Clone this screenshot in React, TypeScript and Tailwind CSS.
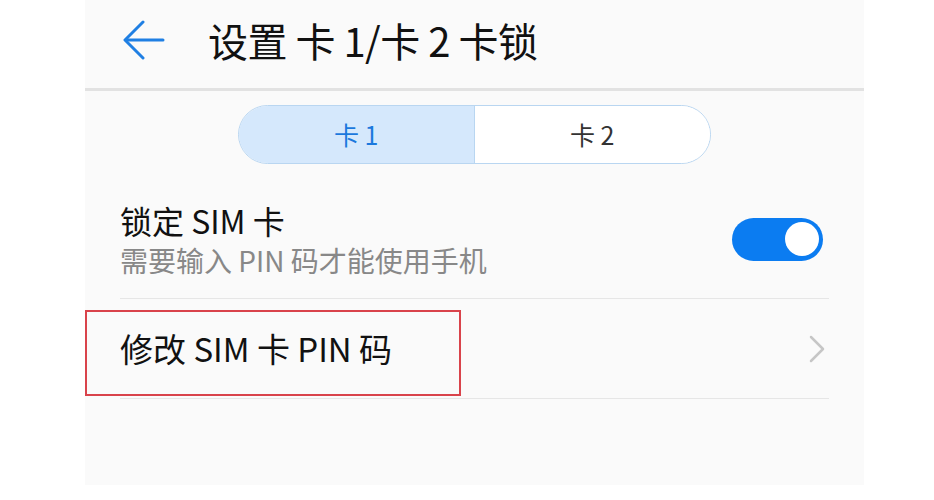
export default function App() {
    const font = { fontFamily: '"Noto Sans CJK SC", "Noto Sans", sans-serif' };

    return (
        <div className="w-full h-[500px] bg-white" style={font}>
            <div className="ml-[85px] w-[779px] h-[485px] bg-[#fafafa] flex flex-col">
                {/* header */}
                <div className="h-[88px] flex items-center pl-[38px] pb-[8px]">
                    <svg width="42" height="40" viewBox="0 0 42 40" fill="none" stroke="#1f7fe3" strokeWidth="3" strokeLinecap="round" strokeLinejoin="round">
                        <path d="M40 20H3" />
                        <path d="M20 2L2 20L20 38" />
                    </svg>
                    <h1 className="ml-[43px] text-[40px] leading-none text-[#111] tracking-[-0.5px]">设置 卡 1/卡 2 卡锁</h1>
                </div>
                <div className="h-[3px] bg-[#e2e2e2]" />

                {/* sim tabs */}
                <div className="mt-[14px] ml-[153px] w-[473px] h-[59px] rounded-full border-[1.5px] border-[#b9d6f1] overflow-hidden flex">
                    <div className="w-1/2 bg-[#d5e8fc] border-r-[1.5px] border-[#b9d6f1] flex items-center justify-center text-[25px] text-[#1b78dd]">卡 1</div>
                    <div className="w-1/2 bg-white flex items-center justify-center text-[25px] text-[#333]">卡 2</div>
                </div>

                {/* lock sim */}
                <div className="mx-[35px] h-[135px] flex items-center justify-between border-b border-[#e6e6e6] pt-[16px]">
                    <div className="flex flex-col">
                        <span className="text-[32px] leading-[40px] text-[#111]">锁定 SIM 卡</span>
                        <span className="text-[28px] leading-[36px] text-[#888] mt-[2px]">需要输入 PIN 码才能使用手机</span>
                    </div>
                    <div className="mr-[6px] w-[91px] h-[43px] rounded-full bg-[#0b7cf1] flex items-center justify-end pr-[4px]">
                        <div className="w-[34px] h-[34px] rounded-full bg-white" />
                    </div>
                </div>

                {/* change pin */}
                <div className="relative">
                    <div className="mx-[35px] h-[100px] flex items-center justify-between border-b border-[#e6e6e6]">
                        <span className="text-[33px] text-[#111]">修改 SIM 卡 PIN 码</span>
                        <svg className="mr-[4px]" width="16" height="28" viewBox="0 0 16 28" fill="none" stroke="#c6c6c6" strokeWidth="2.5" strokeLinecap="round" strokeLinejoin="round">
                            <path d="M2 2L14 14L2 26" />
                        </svg>
                    </div>
                    <div className="absolute left-0 top-[11px] w-[376px] h-[86px] border-[2.5px] border-[#d9434b]" />
                </div>
            </div>
        </div>
    );
}
